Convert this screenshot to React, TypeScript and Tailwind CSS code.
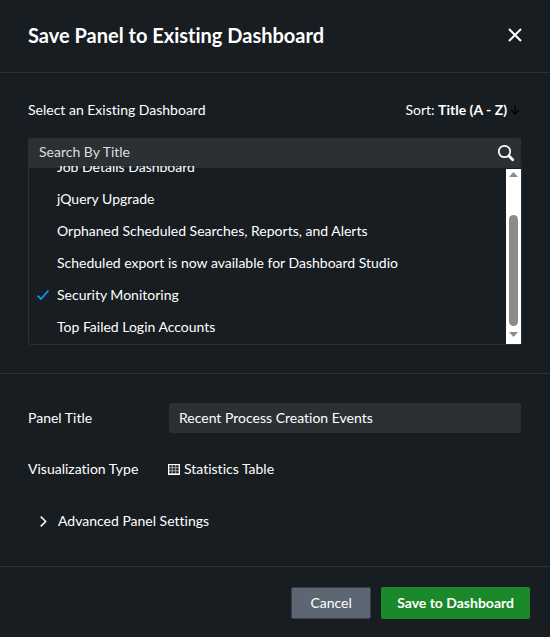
import { useState } from "react";

const dashboards = [
  "Job Details Dashboard",
  "jQuery Upgrade",
  "Orphaned Scheduled Searches, Reports, and Alerts",
  "Scheduled export is now available for Dashboard Studio",
  "Security Monitoring",
  "Top Failed Login Accounts",
];

function CloseIcon() {
  return (
    <svg width="14" height="14" viewBox="0 0 14 14" fill="none" stroke="currentColor" strokeWidth="2" aria-hidden="true">
      <path d="M1 1l12 12M13 1L1 13" />
    </svg>
  );
}

function SortIcon() {
  return (
    <svg width="10" height="10" viewBox="0 0 10 10" fill="none" stroke="#000000" strokeWidth="1.3" aria-hidden="true">
      <path d="M5 0v9M1 5l4 4 4-4" />
    </svg>
  );
}

function SearchIcon() {
  return (
    <svg width="18" height="18" viewBox="0 0 18 18" fill="none" stroke="currentColor" aria-hidden="true">
      <circle cx="7.5" cy="7.5" r="5.7" strokeWidth="1.7" />
      <path d="M12 12l3.7 3.7" strokeWidth="2.8" strokeLinecap="round" />
    </svg>
  );
}

function CheckIcon() {
  return (
    <svg width="12" height="10" viewBox="0 0 12 10" fill="none" stroke="#0a9cf5" strokeWidth="1.7" aria-hidden="true">
      <path d="M0.6 5.6l3.3 3.4L11.4 0.6" />
    </svg>
  );
}

function TableIcon() {
  return (
    <svg width="12" height="11" viewBox="0 0 12 11" aria-hidden="true">
      <rect width="12" height="11" fill="#ffffff" />
      <rect x="1.3" y="1.2" width="9.4" height="8.2" fill="#a9abad" />
      <path
        fill="#181d21"
        d="M1.4 1.3h2.4v2H1.4zM4.8 1.3h2.4v2H4.8zM8.2 1.3h2.4v2H8.2zM1.4 4.2h2.4v2H1.4zM4.8 4.2h2.4v2H4.8zM8.2 4.2h2.4v2H8.2zM1.4 7.2h2.4v2H1.4zM4.8 7.2h2.4v2H4.8zM8.2 7.2h2.4v2H8.2z"
      />
    </svg>
  );
}

function ChevronIcon() {
  return (
    <svg width="7" height="11" viewBox="0 0 7 11" fill="none" stroke="currentColor" strokeWidth="1.5" aria-hidden="true">
      <path d="M0.7 0.6l5 4.9-5 4.9" />
    </svg>
  );
}

function ScrollBar() {
  return (
    <div className="mt-[3px] flex w-[15px] flex-col items-center bg-white pt-[3px] pb-[7px]" aria-hidden="true">
      <svg width="9" height="5" viewBox="0 0 9 5" fill="#8b8b8b">
        <path d="M4.5 0L9 5H0z" />
      </svg>
      <div className="mt-[38px] w-[9px] grow rounded-full bg-[#8b8b8b]" />
      <svg className="mt-1.5" width="9" height="5" viewBox="0 0 9 5" fill="#8b8b8b">
        <path d="M0 0h9L4.5 5z" />
      </svg>
    </div>
  );
}

export default function App() {
  const [selected, setSelected] = useState("Security Monitoring");
  const [title, setTitle] = useState("Recent Process Creation Events");
  const [query, setQuery] = useState("");

  return (
    <main className="min-h-screen bg-[#181d21] font-['Lato','Liberation_Sans',sans-serif] text-sm text-white [font-variant-ligatures:none]">
      <header className="flex items-center justify-between border-b border-[#2e3235] px-7 pt-[21px] pb-[23px]">
        <h1 className="text-xl leading-7 font-bold">Save Panel to Existing Dashboard</h1>
        <button type="button" aria-label="Close">
          <CloseIcon />
        </button>
      </header>

      <section className="border-b border-[#2e3235] px-7 pt-[27px] pb-7">
        <div className="flex items-center justify-between">
          <label htmlFor="search">Select an Existing Dashboard</label>
          <button type="button" className="flex items-center gap-[3px] pr-0.5">
            <span>
              Sort: <b>Title (A - Z)</b>
            </span>
            <SortIcon />
          </button>
        </div>

        <div className="mt-[18px] mr-px flex h-[30px] items-center rounded-xs bg-[#2c3033] pr-1.5 pl-[11px]">
          <input
            id="search"
            className="min-w-0 grow bg-transparent pb-0.5 placeholder:text-[#dcdddd] focus:outline-none"
            placeholder="Search By Title"
            value={query}
            onChange={(e) => setQuery(e.target.value)}
          />
          <button type="button" aria-label="Search">
            <SearchIcon />
          </button>
        </div>

        <div className="-mt-0.5 flex h-[179px] rounded-b-sm border-x border-b border-[#2e3235]">
          <ul className="flex min-w-0 grow flex-col justify-end overflow-hidden pb-px">
            {dashboards.map((name) => (
              <li key={name} className="shrink-0">
                <button
                  type="button"
                  aria-pressed={name === selected}
                  onClick={() => setSelected(name)}
                  className="flex h-8 w-full items-center pl-2 text-left"
                >
                  <span className="w-5">{name === selected && <CheckIcon />}</span>
                  {name}
                </button>
              </li>
            ))}
          </ul>
          <ScrollBar />
        </div>
      </section>

      <section className="border-b border-[#2e3235] px-7 pt-[29px] pb-[35px]">
        <div className="flex items-center">
          <label htmlFor="panel-title" className="w-[141px] shrink-0 pb-px">
            Panel Title
          </label>
          <input
            id="panel-title"
            className="mr-px h-[30px] min-w-0 grow rounded-xs bg-[#2c3033] px-2.5 pb-0.5 focus:outline-none"
            value={title}
            onChange={(e) => setTitle(e.target.value)}
          />
        </div>
        <div className="mt-[26px] flex items-center">
          <span className="w-[140px] shrink-0">Visualization Type</span>
          <span className="flex items-center gap-1">
            <TableIcon />
            Statistics Table
          </span>
        </div>
        <button type="button" className="mt-8 flex items-center gap-[11px] pl-3">
          <ChevronIcon />
          Advanced Panel Settings
        </button>
      </section>

      <footer className="flex justify-end gap-2.5 px-5 pt-5 pb-[18px]">
        <button type="button" className="h-8 min-w-20 rounded-xs border border-[#3a4049] bg-[#5c6773] px-4 pb-px">
          Cancel
        </button>
        <button type="button" className="h-8 rounded-xs bg-[#1a8929] px-4 pb-px font-bold">
          Save to Dashboard
        </button>
      </footer>
    </main>
  );
}
